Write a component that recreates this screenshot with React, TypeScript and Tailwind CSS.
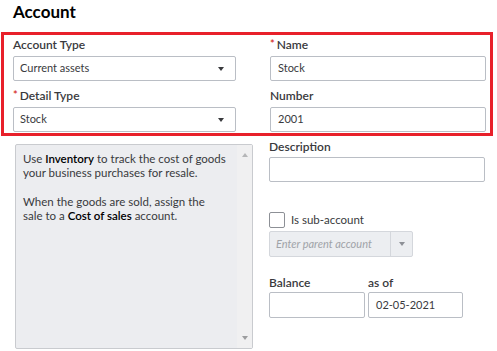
import React from "react";

const Caret = ({ className = "" }: { className?: string }) => (
  <svg width="6" height="4" viewBox="0 0 6 4" className={className}>
    <path d="M0 0h6L3 4z" fill="currentColor" />
  </svg>
);

function Label({ text, required }: { text: string; required?: boolean }) {
  return (
    <div className="h-[14px] leading-[14px] text-[12px] font-semibold text-[#393a3d] flex items-center">
      {required && <span className="text-[#d52b1e] text-[11px] mr-[2px] -mt-[2px]">*</span>}
      {text}
    </div>
  );
}

function Select({ value }: { value: string }) {
  return (
    <div className="mt-[4px] h-[25px] w-[223px] border border-[#babec5] rounded-[2px] flex items-center justify-between pl-[6px] pr-[11px] text-[11px] text-[#393a3d]">
      <span>{value}</span>
      <Caret className="text-[#393a3d]" />
    </div>
  );
}

function Input({ value = "", className = "" }: { value?: string; className?: string }) {
  return (
    <div className={`h-[25px] border border-[#babec5] rounded-[2px] flex items-center pl-[7px] text-[11px] text-[#393a3d] ${className}`}>
      {value}
    </div>
  );
}

export default function App() {
  return (
    <div className="w-[497px] h-[351px] bg-white overflow-hidden" style={{ fontFamily: "Lato, 'Open Sans', sans-serif" }}>
      <h1 className="h-[32px] pl-[13px] pt-[1px] text-[17px] leading-[22px] font-bold text-black">Account</h1>

      {/* highlighted block */}
      <div className="ml-[1px] w-[492px] h-[104px] border-[3px] border-[#e8202a] flex pt-[3px]">
        <div className="ml-[9px] w-[223px]">
          <Label text="Account Type" />
          <Select value="Current assets" />
          <div className="mt-[8px]">
            <Label text="Detail Type" required />
          </div>
          <Select value="Stock" />
        </div>
        <div className="ml-[34px] w-[216px]">
          <Label text="Name" required />
          <Input value="Stock" className="mt-[4px]" />
          <div className="mt-[8px]">
            <Label text="Number" />
          </div>
          <Input value="2001" className="mt-[4px]" />
        </div>
      </div>

      <div className="flex pl-[15px]">
        <div className="mt-[8px] w-[238px] h-[205px] border border-[#c9cbcf] rounded-[2px] bg-[#ecedf0] flex">
          <div className="flex-1 pl-[7px] pt-[7px] text-[11.5px] leading-[14px] text-[#393a3d]">
            <p>
              Use <span className="font-semibold text-black">Inventory</span> to track the cost of goods your business purchases for resale.
            </p>
            <p className="mt-[15px]">
              When the goods are sold, assign the
              <br />
              sale to a <span className="font-semibold text-black">Cost of sales</span> account.
            </p>
          </div>
          <div className="w-[15px] bg-[#f0f0f1] flex flex-col justify-between items-center py-[8px]">
            <Caret className="text-[#b5b6b8] rotate-180" />
            <Caret className="text-[#9c9d9f]" />
          </div>
        </div>

        <div className="ml-[16px] mt-[4px] w-[216px]">
          <Label text="Description" />
          <Input className="mt-[3px]" />

          <div className="mt-[30px] flex items-center h-[16px]">
            <div className="w-[16px] h-[16px] border border-[#8d9096] rounded-[2px] bg-white" />
            <span className="ml-[6px] text-[11.5px] text-[#393a3d]">Is sub-account</span>
          </div>

          <div className="mt-[3px] w-[144px] h-[26px] border border-[#d4d7dc] rounded-[2px] bg-[#eceef1] flex">
            <div className="flex-1 flex items-center pl-[6px] text-[11px] italic text-[#a0a3a8]">Enter parent account</div>
            <div className="w-[22px] border-l border-[#d4d7dc] flex items-center justify-center">
              <Caret className="text-[#8d9096]" />
            </div>
          </div>

          <div className="mt-[19px] flex">
            <div className="w-[99px]"><Label text="Balance" /></div>
            <Label text="as of" />
          </div>
          <div className="mt-[2px] flex gap-[3px]">
            <Input className="w-[96px] h-[26px]" />
            <Input value="02-05-2021" className="w-[95px] h-[26px]" />
          </div>
        </div>
      </div>
    </div>
  );
}
